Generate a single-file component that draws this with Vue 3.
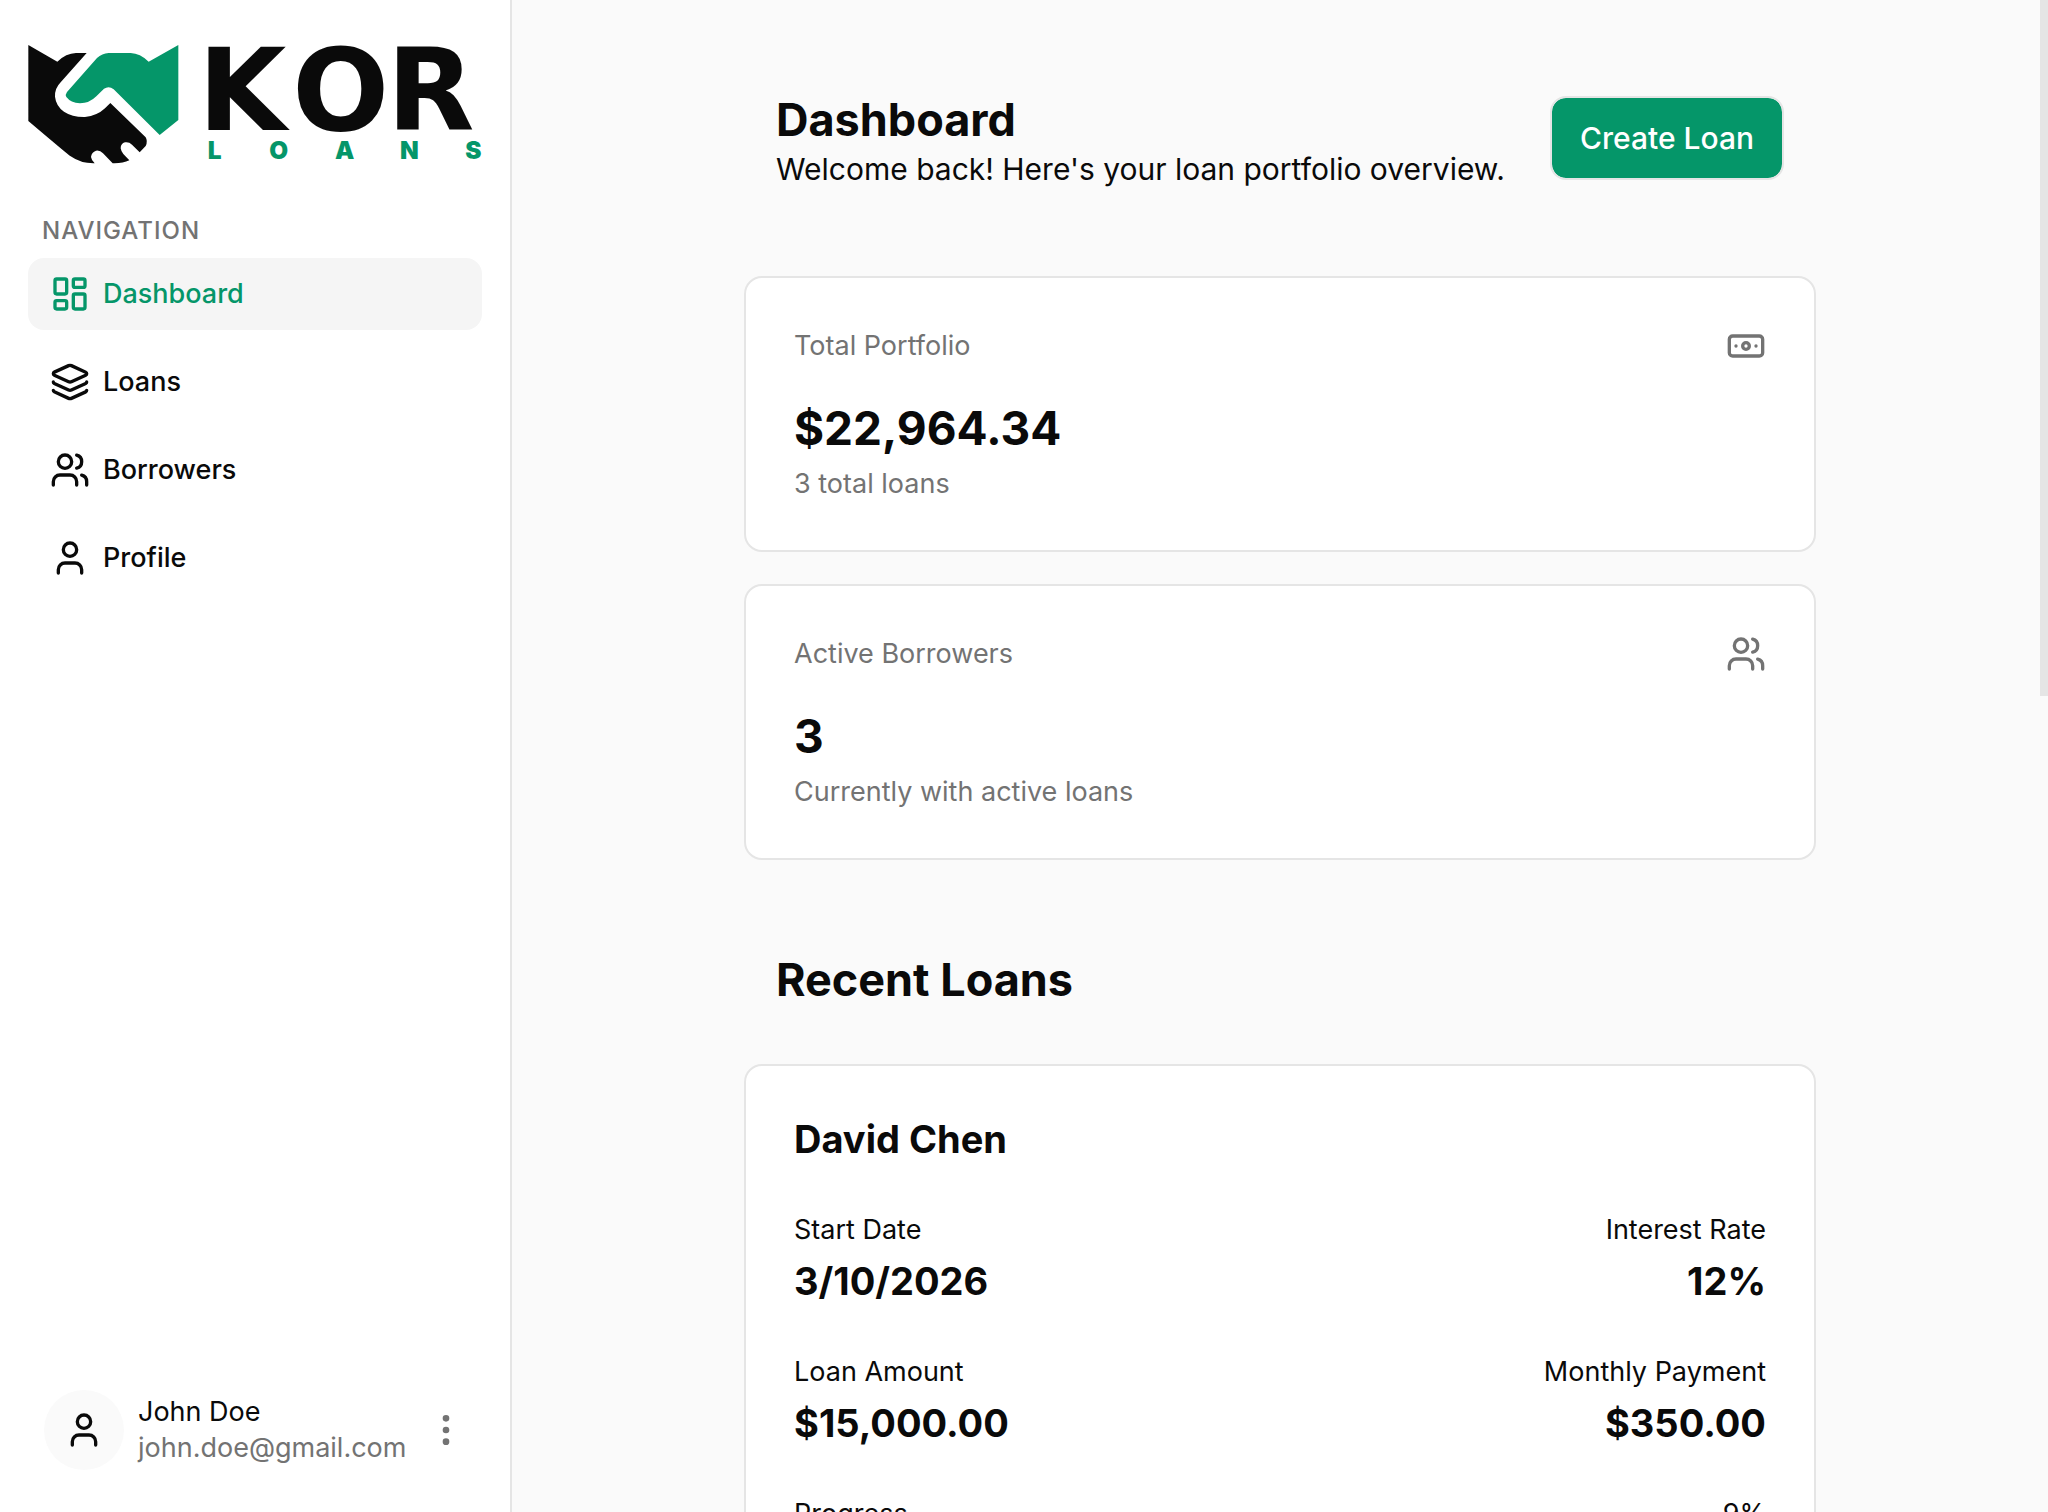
<script setup>
const navItems = [
  { label: 'Dashboard', icon: 'dashboard', active: true },
  { label: 'Loans', icon: 'layers', active: false },
  { label: 'Borrowers', icon: 'users', active: false },
  { label: 'Profile', icon: 'user', active: false },
]

const icons = {
  dashboard: [
    'M4 3h5a1 1 0 0 1 1 1v7a1 1 0 0 1-1 1H4a1 1 0 0 1-1-1V4a1 1 0 0 1 1-1z',
    'M15 3h5a1 1 0 0 1 1 1v3a1 1 0 0 1-1 1h-5a1 1 0 0 1-1-1V4a1 1 0 0 1 1-1z',
    'M15 12h5a1 1 0 0 1 1 1v7a1 1 0 0 1-1 1h-5a1 1 0 0 1-1-1v-7a1 1 0 0 1 1-1z',
    'M4 16h5a1 1 0 0 1 1 1v3a1 1 0 0 1-1 1H4a1 1 0 0 1-1-1v-3a1 1 0 0 1 1-1z',
  ],
  layers: [
    'm12.83 2.18a2 2 0 0 0-1.66 0L2.6 6.08a1 1 0 0 0 0 1.83l8.58 3.91a2 2 0 0 0 1.66 0l8.58-3.9a1 1 0 0 0 0-1.83Z',
    'M2 12a1 1 0 0 0 .58.91l8.6 3.91a2 2 0 0 0 1.65 0l8.58-3.9A1 1 0 0 0 22 12',
    'M2 17a1 1 0 0 0 .58.91l8.6 3.91a2 2 0 0 0 1.65 0l8.58-3.9A1 1 0 0 0 22 17',
  ],
  users: [
    'M16 21v-2a4 4 0 0 0-4-4H6a4 4 0 0 0-4 4v2',
    'M13 7a4 4 0 1 1-8 0 4 4 0 0 1 8 0z',
    'M22 21v-2a4 4 0 0 0-3-3.87',
    'M16 3.13a4 4 0 0 1 0 7.75',
  ],
  user: [
    'M19 21v-2a4 4 0 0 0-4-4H9a4 4 0 0 0-4 4v2',
    'M16 7a4 4 0 1 1-8 0 4 4 0 0 1 8 0z',
  ],
  banknote: [
    'M4 6h16a2 2 0 0 1 2 2v8a2 2 0 0 1-2 2H4a2 2 0 0 1-2-2V8a2 2 0 0 1 2-2z',
    'M14 12a2 2 0 1 1-4 0 2 2 0 0 1 4 0z',
    'M6 12h.01M18 12h.01',
  ],
  more: [
    'M13 5a1 1 0 1 1-2 0 1 1 0 0 1 2 0z',
    'M13 12a1 1 0 1 1-2 0 1 1 0 0 1 2 0z',
    'M13 19a1 1 0 1 1-2 0 1 1 0 0 1 2 0z',
  ],
}

const stats = [
  { label: 'Total Portfolio', value: '$22,964.34', note: '3 total loans', icon: 'banknote' },
  { label: 'Active Borrowers', value: '3', note: 'Currently with active loans', icon: 'users' },
]

const loan = {
  borrower: 'David Chen',
  progress: 9,
  details: [
    { label: 'Start Date', value: '3/10/2026' },
    { label: 'Interest Rate', value: '12%' },
    { label: 'Loan Amount', value: '$15,000.00' },
    { label: 'Monthly Payment', value: '$350.00' },
  ],
}
</script>

<template>
  <div class="app">
    <aside class="sidebar">
      <a href="#" class="logo" aria-label="KOR Loans">
        <svg viewBox="84 72 1362 363">
          <path class="ink" d="M85 75L172 125Q198 100 228 99H260L182 187Q164 205 165 230Q168 258 192 275Q218 292 255 291Q292 287 315 265L331 249L437 352Q444 364 437 378L419 397L396 374Q387 365 375 367Q362 371 362 385Q363 393 370 402L388 421Q368 431 338 430L309 400Q300 390 288 392Q275 396 273 411Q274 420 284 430Q243 431 212 409Q204 404 85 303Z" />
          <path class="brand" d="M535 75V300L479 345L341 208Q327 196 312 206L289 229Q268 250 240 250Q212 248 199 231Q195 224 201 216L291 114Q306 100 326 99H392Q420 100 446 125Z" />
          <text class="ink wordmark" x="594 877 1160" y="331">KOR</text>
          <text class="brand tagline" x="623 808 1005 1200 1396" y="418">LOANS</text>
        </svg>
      </a>

      <nav class="nav" aria-labelledby="nav-title">
        <h2 id="nav-title" class="nav-title">NAVIGATION</h2>
        <a
          v-for="item in navItems"
          :key="item.label"
          href="#"
          class="nav-item"
          :class="{ active: item.active }"
        >
          <svg class="icon" viewBox="0 0 24 24"><path v-for="d in icons[item.icon]" :key="d" :d="d" /></svg>
          <span>{{ item.label }}</span>
        </a>
      </nav>

      <button type="button" class="account">
        <span class="avatar">
          <svg class="icon" viewBox="0 0 24 24"><path v-for="d in icons.user" :key="d" :d="d" /></svg>
        </span>
        <span class="identity">
          <span>John Doe</span>
          <span class="email">john.doe@gmail.com</span>
        </span>
        <svg class="icon more" viewBox="0 0 24 24"><path v-for="d in icons.more" :key="d" :d="d" /></svg>
      </button>
    </aside>

    <main class="main">
      <div class="content">
        <header class="page-header">
          <div>
            <h1>Dashboard</h1>
            <p>Welcome back! Here's your loan portfolio overview.</p>
          </div>
          <button type="button" class="create">Create Loan</button>
        </header>

        <section class="stats">
          <article v-for="stat in stats" :key="stat.label" class="card">
            <div class="card-top">
              <span>{{ stat.label }}</span>
              <svg class="icon" viewBox="0 0 24 24"><path v-for="d in icons[stat.icon]" :key="d" :d="d" /></svg>
            </div>
            <div class="stat-value">{{ stat.value }}</div>
            <div class="stat-note">{{ stat.note }}</div>
          </article>
        </section>

        <section>
          <h2 class="section-title">Recent Loans</h2>
          <article class="card">
            <h3>{{ loan.borrower }}</h3>
            <dl class="details">
              <div v-for="d in loan.details" :key="d.label" class="detail">
                <dt>{{ d.label }}</dt>
                <dd>{{ d.value }}</dd>
              </div>
            </dl>
            <div class="progress-row">
              <span>Progress</span>
              <span>{{ loan.progress }}%</span>
            </div>
            <div class="track"><div class="fill" :style="{ width: loan.progress + '%' }"></div></div>
          </article>
        </section>
      </div>
      <div class="scroll-thumb"></div>
    </main>
  </div>
</template>

<style>
body {
  margin: 0;
  background: #fafafa;
}
</style>

<style scoped>
.app {
  display: flex;
  height: 100vh;
  overflow: hidden;
  font-family: Inter, "Liberation Sans", sans-serif;
  font-size: 27px;
  line-height: 36px;
  color: #0a0a0a;
}
.app * {
  box-sizing: border-box;
}
h1, h2, h3, p, dl, dd {
  margin: 0;
}
button {
  font: inherit;
  color: inherit;
  cursor: pointer;
}
a {
  color: inherit;
  text-decoration: none;
}
.icon {
  width: 40px;
  height: 40px;
  flex: none;
  fill: none;
  stroke: currentColor;
  stroke-width: 2;
  stroke-linecap: round;
  stroke-linejoin: round;
}

.sidebar {
  width: 512px;
  flex: none;
  display: flex;
  flex-direction: column;
  padding: 44px 28px 28px;
  background: #fff;
  border-right: 2px solid #e5e5e5;
}
.logo svg {
  display: block;
  width: 100%;
  overflow: visible;
}
.ink {
  fill: #0a0a0a;
}
.brand {
  fill: #059669;
}
.wordmark {
  font-family: "DejaVu Sans", sans-serif;
  font-size: 342px;
  font-weight: 700;
}
.tagline {
  font-size: 73px;
  font-weight: 900;
}
.nav {
  display: flex;
  flex-direction: column;
  gap: 16px;
  margin-top: 48px;
}
.nav-title {
  padding: 0 14px;
  margin-bottom: -7px;
  font-size: 24px;
  font-weight: 500;
  letter-spacing: 1px;
  color: #737373;
}
.nav-item {
  display: flex;
  align-items: center;
  gap: 13px;
  height: 72px;
  padding: 0 22px;
  border-radius: 16px;
  font-weight: 500;
}
.nav-item.active {
  background: #f5f5f5;
  color: #059669;
}
.account {
  display: flex;
  align-items: center;
  gap: 14px;
  margin-top: auto;
  padding: 14px 16px;
  border: 0;
  background: none;
  text-align: left;
}
.avatar {
  display: grid;
  place-items: center;
  width: 80px;
  height: 80px;
  flex: none;
  border-radius: 50%;
  background: #fafafa;
}
.identity {
  display: flex;
  flex-direction: column;
}
.email {
  color: #737373;
}
.more {
  margin-left: auto;
  color: #737373;
}

.main {
  position: relative;
  flex: 1;
  overflow: hidden;
  background: #fafafa;
}
.content {
  max-width: 1072px;
  margin: 0 auto;
  padding-top: 96px;
}
.page-header {
  display: flex;
  justify-content: space-between;
  align-items: flex-start;
  padding: 0 32px;
  margin-bottom: 84px;
}
h1,
.section-title {
  font-size: 45px;
  line-height: 48px;
  font-weight: 700;
}
.page-header p {
  font-size: 30px;
  line-height: 50px;
}
.page-header {
  margin-bottom: 82px;
}
.create {
  height: 84px;
  padding: 0 28px;
  border: 2px solid #e5e5e5;
  border-radius: 16px;
  background: #059669;
  background-clip: padding-box;
  color: #fff;
  font-size: 30px;
  font-weight: 500;
}
.stats {
  display: flex;
  flex-direction: column;
  gap: 32px;
}
.card {
  padding: 48px;
  border: 2px solid #e5e5e5;
  border-radius: 18px;
  background: #fff;
}
.card-top {
  display: flex;
  justify-content: space-between;
  align-items: center;
  color: #737373;
}
.stat-value {
  margin: 32px 0 8px;
  font-size: 46px;
  line-height: 60px;
  font-weight: 700;
}
.stat-note {
  color: #737373;
}
.section-title {
  padding: 0 32px;
  margin: 96px 0 60px;
}
h3,
dd {
  font-size: 38px;
  line-height: 50px;
  font-weight: 700;
}
.details {
  display: grid;
  grid-template-columns: 1fr 1fr;
  gap: 48px;
  margin: 48px 0;
}
.detail:nth-child(even) {
  text-align: right;
}
dt {
  margin-bottom: 8px;
}
.progress-row {
  display: flex;
  justify-content: space-between;
}
.track {
  height: 16px;
  margin-top: 16px;
  border-radius: 8px;
  background: #e5e5e5;
}
.fill {
  height: 100%;
  border-radius: 8px;
  background: #059669;
}
.scroll-thumb {
  position: absolute;
  top: 0;
  right: 0;
  width: 8px;
  height: 46%;
  background: #e5e5e5;
}
</style>
